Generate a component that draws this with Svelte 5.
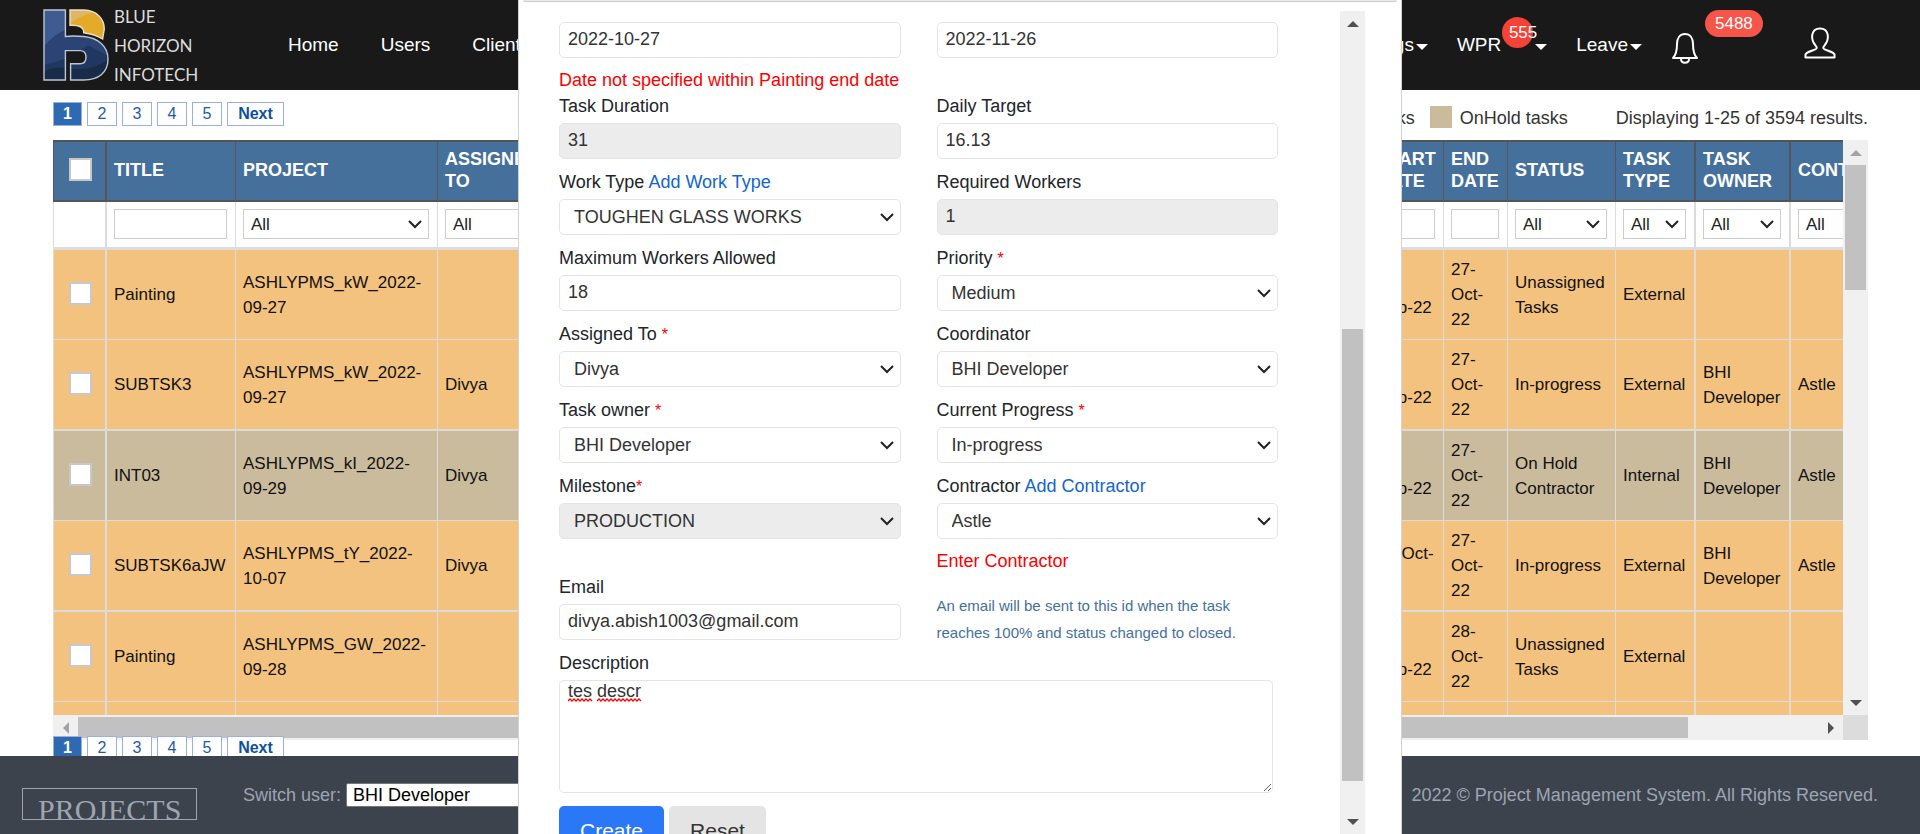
<script>
  const pages = ['1', '2', '3', '4', '5', 'Next'];

  const rows = [
    { title: 'Painting', project: 'ASHLYPMS_kW_2022-09-27', to: '', start: '27-Sep-22', end: '27-Oct-22', status: 'Unassigned Tasks', type: 'External', owner: '', contractor: '' },
    { title: 'SUBTSK3', project: 'ASHLYPMS_kW_2022-09-27', to: 'Divya', start: '27-Sep-22', end: '27-Oct-22', status: 'In-progress', type: 'External', owner: 'BHI Developer', contractor: 'Astle' },
    { title: 'INT03', project: 'ASHLYPMS_kI_2022-09-29', to: 'Divya', start: '29-Sep-22', end: '27-Oct-22', status: 'On Hold Contractor', type: 'Internal', owner: 'BHI Developer', contractor: 'Astle', hold: true },
    { title: 'SUBTSK6aJW', project: 'ASHLYPMS_tY_2022-10-07', to: 'Divya', start: '07-Oct-22', end: '27-Oct-22', status: 'In-progress', type: 'External', owner: 'BHI Developer', contractor: 'Astle' },
    { title: 'Painting', project: 'ASHLYPMS_GW_2022-09-28', to: '', start: '28-Sep-22', end: '28-Oct-22', status: 'Unassigned Tasks', type: 'External', owner: '', contractor: '' },
    { title: '', project: '', to: '', start: '', end: '', status: '', type: '', owner: '', contractor: '' }
  ];

  const fields = [
    { id: 'start', kind: 'input', value: '2022-10-27', aria: 'Start date', error: 'Date not specified within Painting end date' },
    { id: 'end', kind: 'input', value: '2022-11-26', aria: 'End date' },
    { id: 'duration', kind: 'input', label: 'Task Duration', value: '31', off: true },
    { id: 'target', kind: 'input', label: 'Daily Target', value: '16.13' },
    { id: 'worktype', kind: 'select', label: 'Work Type', link: 'Add Work Type', value: 'TOUGHEN GLASS WORKS' },
    { id: 'required', kind: 'input', label: 'Required Workers', value: '1', off: true },
    { id: 'maxworkers', kind: 'input', label: 'Maximum Workers Allowed', value: '18' },
    { id: 'priority', kind: 'select', label: 'Priority ', star: true, value: 'Medium' },
    { id: 'assigned', kind: 'select', label: 'Assigned To ', star: true, value: 'Divya' },
    { id: 'coordinator', kind: 'select', label: 'Coordinator', value: 'BHI Developer' },
    { id: 'owner', kind: 'select', label: 'Task owner ', star: true, value: 'BHI Developer' },
    { id: 'progress', kind: 'select', label: 'Current Progress ', star: true, value: 'In-progress' },
    { id: 'milestone', kind: 'select', label: 'Milestone', star: true, value: 'PRODUCTION', off: true },
    { id: 'contractor', kind: 'select', label: 'Contractor', link: 'Add Contractor', value: 'Astle', error: 'Enter Contractor' },
    { id: 'email', kind: 'input', label: 'Email', value: 'divya.abish1003@gmail.com' }
  ];

  let description = 'tes descr';
</script>

{#snippet pager()}
  <nav class="pager" aria-label="Pages">
    {#each pages as p, i}
      <a href="#page" class:current={i === 0} class:next={p === 'Next'}>{p}</a>
    {/each}
  </nav>
{/snippet}

{#snippet all(name)}
  <select class="filter" aria-label={name}><option>All</option></select>
{/snippet}

{#snippet arrow(dir)}
  <span class="arrow">
    <svg width="12" height="12" viewBox="0 0 12 12">
      {#if dir === 'up'}<path d="M0 9 6 3 12 9Z" />{/if}
      {#if dir === 'down'}<path d="M0 3 6 9 12 3Z" />{/if}
      {#if dir === 'left'}<path d="M9 0 3 6 9 12Z" />{/if}
      {#if dir === 'right'}<path d="M3 0 9 6 3 12Z" />{/if}
    </svg>
  </span>
{/snippet}

<div class="page">
  <header>
    <a class="logo" href="#home">
      <svg width="68" height="72" viewBox="0 0 68 72">
        <defs>
          <clipPath id="bclip">
            <path d="M2 1H23.4V27.5C28 26.8 35 27 42 27.5C56 29 66 37 66 50C66 64 56 71 42 71H28.6V54.8H38C42 54.8 44 52 44 48C44 44 42 41.6 38 41.6H23.4V71H2Z" />
          </clipPath>
        </defs>
        <g clip-path="url(#bclip)">
          <rect width="68" height="72" fill="#2b4475" />
          <path d="M0 0H25V20Q10 26 0 40Z" fill="#3e5b92" />
          <path d="M0 56Q26 52 46 36L68 48V72H0Z" fill="#20385f" />
          <path d="M0 63Q16 56 30 60Q50 62 68 50V72H0Z" fill="#182b48" />
        </g>
        <path d="M2 1H23.4V27.5C28 26.8 35 27 42 27.5C56 29 66 37 66 50C66 64 56 71 42 71H28.6V54.8H38C42 54.8 44 52 44 48C44 44 42 41.6 38 41.6H23.4V71H2Z" fill="none" stroke="#bcc6d4" stroke-width="1.4" />
        <path d="M28 1H42C55 1.500 62.300 10 62.300 20L60.600 30C56 27 49 24.600 41.700 23.700C42 18 37 16 28 16.300Z" fill="#e3ab28" />
        <path d="M28 1H42L51 4Q36 7 28 15Z" fill="#ddb765" />
        <path d="M28 1H42C55 1.500 62.300 10 62.300 20L60.600 30C56 27 49 24.600 41.700 23.700C42 18 37 16 28 16.300Z" fill="none" stroke="#e9dfc4" stroke-width="1.400" />
      </svg>
      <span class="brand">BLUE<br />HORIZON<br />INFOTECH</span>
    </a>
    <nav class="menu">
      <a href="#home">Home</a>
      <a href="#users">Users</a>
      <a href="#clients">Clients</a>
    </nav>
    <nav class="menu right">
      <a href="#settings">Settings<i class="caret"></i></a>
      <a href="#wpr" class="wpr">WPR<b class="dot">555</b><i class="caret"></i></a>
      <a href="#leave">Leave<i class="caret"></i></a>
      <a href="#alerts" class="bell" aria-label="Alerts">
        <svg width="28" height="32" viewBox="0 0 28 32" fill="none" stroke="#fff" stroke-width="2">
          <path d="M2 26C5 23 6 20 6 12C6 6 9 2 14 2S22 6 22 12C22 20 23 23 26 26Z" stroke-linejoin="round" />
          <path d="M10 27C10 32 18 32 18 27" />
        </svg>
        <b class="pill">5488</b>
      </a>
      <a href="#profile" class="user" aria-label="Profile">
        <svg width="32" height="32" viewBox="0 0 32 32" fill="none" stroke="#fff" stroke-width="2" stroke-linejoin="round">
          <path d="M1.500 30.500V27.500C2 24.500 11 23.500 12.500 21.500C13 20.500 12.500 19.500 11.500 18.500C6 12 7 1.500 16 1.500S26 12 20.500 18.500C19.500 19.500 19 20.500 19.500 21.500C21 23.500 30 24.500 30.500 27.500V30.500Z" />
        </svg>
      </a>
    </nav>
  </header>

  <main>
    <div class="toolbar">
      {@render pager()}
      <div class="legend">
        <span class="before">tasks</span>
        <i class="swatch"></i><span>OnHold tasks</span>
        <span class="count">Displaying 1-25 of 3594 results.</span>
      </div>
    </div>

    <div class="grid">
      <div class="view">
        <table>
          <colgroup>
            <col class="c-check" /><col class="c-title" /><col class="c-project" /><col class="c-to" /><col />
            <col class="c-start" /><col class="c-end" /><col class="c-status" /><col class="c-type" /><col class="c-owner" /><col class="c-last" />
          </colgroup>
          <thead>
            <tr>
              <th class="check"><input type="checkbox" aria-label="Select all" /></th>
              <th>TITLE</th><th>PROJECT</th><th>ASSIGNED TO</th><th></th>
              <th>START DATE</th><th>END DATE</th><th>STATUS</th><th class="wide">TASK TYPE</th><th class="wide">TASK OWNER</th><th>CONTRACTOR</th>
            </tr>
            <tr class="filters">
              <td class="check"></td>
              <td><input class="filter" aria-label="Title" /></td>
              <td>{@render all('Project')}</td>
              <td>{@render all('Assigned to')}</td>
              <td></td>
              <td><input class="filter" aria-label="Start date" /></td>
              <td><input class="filter" aria-label="End date" /></td>
              <td>{@render all('Status')}</td>
              <td class="wide">{@render all('Task type')}</td>
              <td class="wide">{@render all('Task owner')}</td>
              <td>{@render all('Contractor')}</td>
            </tr>
          </thead>
          <tbody>
            {#each rows as r}
              <tr class:hold={r.hold}>
                <td class="check">{#if r.title}<input type="checkbox" aria-label={r.title} />{/if}</td>
                <td>{r.title}</td><td>{r.project}</td><td>{r.to}</td><td></td>
                <td>{r.start}</td><td>{r.end}</td><td>{r.status}</td>
                <td class="wide">{r.type}</td><td class="wide">{r.owner}</td><td>{r.contractor}</td>
              </tr>
            {/each}
          </tbody>
        </table>
      </div>
      <div class="bar vertical soft">
        {@render arrow('up')}<i class="thumb v1"></i><i class="v2"></i>{@render arrow('down')}
      </div>
      <div class="bar horizontal">
        {@render arrow('left')}<i class="thumb h1"></i><i class="h2"></i>{@render arrow('right')}
      </div>
      <div class="corner"></div>
    </div>
    <div class="below">{@render pager()}</div>
  </main>

  <footer>
    <div class="stamp"><span>PROJECTS</span></div>
    <label for="switch">Switch user:</label>
    <select id="switch"><option>BHI Developer</option></select>
    <span class="copy">2022 © Project Management System. All Rights Reserved.</span>
  </footer>
</div>

<div class="overlay">
  <div class="dialog" role="dialog" aria-label="Task">
    <div class="titlebar"></div>
    <div class="body">
      <form>
        <div class="fields">
          {#each fields as f}
            <div class="field">
              {#if f.label}
                <div class="caption">
                  <label for={f.id}>{f.label}{#if f.star}<em>*</em>{/if}</label>
                  {#if f.link}<a href="#{f.id}">{f.link}</a>{/if}
                </div>
              {/if}
              {#if f.kind === 'input'}
                <input id={f.id} value={f.value} readonly={f.off} class:off={f.off} aria-label={f.aria} />
              {:else}
                <select id={f.id} class:off={f.off}><option>{f.value}</option></select>
              {/if}
              {#if f.error}<p class="error">{f.error}</p>{/if}
            </div>
          {/each}
          <p class="help">An email will be sent to this id when the task reaches 100% and status changed to closed.</p>
          <div class="field full">
            <div class="caption"><label for="description">Description</label></div>
            <div class="area">
              <textarea id="description" bind:value={description}></textarea>
              <svg class="squiggle" width="76" height="4" viewBox="0 0 76 4" fill="none" stroke="#f00" stroke-width="1.300">
                <path d="M0 3l2-2 2 2 2-2 2 2 2-2 2 2 2-2 2 2 2-2 2 2 2-2 2 2M29 3l2-2 2 2 2-2 2 2 2-2 2 2 2-2 2 2 2-2 2 2 2-2 2 2 2-2 2 2 2-2 2 2 2-2 2 2 2-2 2 2 2-2 2 2" />
              </svg>
            </div>
          </div>
        </div>
        <div class="actions">
          <button type="button" class="create">Create</button>
          <button type="button">Reset</button>
        </div>
      </form>
      <div class="bar vertical">
        {@render arrow('up')}<i class="m1"></i><i class="thumb m2"></i><i class="m3"></i>{@render arrow('down')}
      </div>
    </div>
  </div>
</div>

<style>
  :global(body) {
    margin: 0;
    overflow: hidden;
    font-family: 'Liberation Sans', Arial, sans-serif;
    background: #fff;
  }
  * { box-sizing: border-box; }
  a { text-decoration: none; }
  input, select, textarea, button { font-family: inherit; margin: 0; }
  select {
    appearance: none;
    background: #fff url("data:image/svg+xml,%3Csvg xmlns='http://www.w3.org/2000/svg' width='14' height='9' viewBox='0 0 14 9'%3E%3Cpath d='M1 1l6 6 6-6' fill='none' stroke='%23222' stroke-width='2'/%3E%3C/svg%3E") no-repeat right 6px center;
  }

  .page {
    height: 100vh;
    display: flex;
    flex-direction: column;
    overflow: hidden;
    font-size: 18px;
    color: #333;
  }

  header {
    flex: none;
    height: 90px;
    display: flex;
    align-items: center;
    padding: 0 84px 0 42px;
    background: #191919;
  }
  .logo { display: flex; align-items: center; gap: 4px; width: 246px; }
  .brand { font: 17px/29px Lato, sans-serif; color: #dcdcdc; }
  .menu { display: flex; align-items: center; gap: 42px; font-size: 19px; }
  .menu a { color: #fff; display: flex; align-items: center; }
  .menu.right { margin-left: auto; gap: 29px; }
  .caret {
    margin: 4px 0 0 2px;
    border: 6px solid transparent;
    border-top-color: #fff;
    border-bottom: 0;
  }
  .wpr { position: relative; }
  .wpr .caret { margin-left: 34px; }
  .dot {
    position: absolute;
    left: 45px;
    top: -17px;
    width: 31px;
    height: 31px;
    padding-left: 7px;
    border-radius: 50%;
    background: #f44336;
    font: 17px/31px 'Liberation Sans', sans-serif;
  }
  .bell { position: relative; top: 3px; }
  .pill {
    position: absolute;
    left: 34px;
    top: -22px;
    padding: 0 10px;
    border-radius: 14px;
    background: #f75549;
    font: 17px/27px 'Liberation Sans', sans-serif;
  }
  .user { position: relative; top: -2px; margin-left: 76px; }

  main {
    flex: 1;
    min-height: 0;
    display: flex;
    flex-direction: column;
    padding: 12px 52px 0 53px;
    overflow: hidden;
  }
  .toolbar { display: flex; justify-content: space-between; align-items: flex-start; height: 38px; }
  .pager { display: flex; gap: 5px; }
  .pager a {
    width: 30px;
    height: 24px;
    border: 1px solid #9aafe5;
    background: #fff;
    color: #1e5aa8;
    font-size: 16px;
    line-height: 22px;
    text-align: center;
  }
  .pager a.current { width: 29px; background: #2e6ab1; color: #fff; font-weight: bold; }
  .pager a.next { width: 57px; color: #0e509e; font-weight: bold; }
  .legend { display: flex; align-items: center; gap: 8px; padding-top: 2px; }
  .legend span { padding-top: 4px; }
  .before { margin-right: 7px; }
  .swatch { width: 22px; height: 22px; background: #cbbb9d; }
  .count { margin-left: 40px; }

  .grid {
    flex: 1;
    min-height: 0;
    display: grid;
    grid-template: minmax(0, 1fr) 25px / minmax(0, 1fr) 25px;
  }
  .view { overflow: hidden; }
  .below { flex: none; height: 20px; margin-top: -4px; z-index: 1; }
  .corner { background: #dcdcdc; }
  .bar { display: flex; background: #f0f0f0; }
  .bar.vertical { flex-direction: column; width: 25px; }
  .arrow { flex: none; width: 25px; height: 25px; display: grid; place-items: center; }
  .arrow path { fill: #505050; }
  .soft .arrow:first-child path, .horizontal .arrow:first-child path { fill: #a3a3a3; }
  .thumb { background: #c1c1c1; }
  .vertical .thumb { margin: 0 2px; }
  .horizontal .thumb { margin: 2px 0; }
  .v1 { flex: 5; }
  .v2 { flex: 16; }
  .h1 { flex: 161; }
  .h2 { flex: 13; }
  .m1 { flex: 293; }
  .m2 { flex: 452; }
  .m3 { flex: 28; }

  table {
    width: calc(100% + 87px);
    table-layout: fixed;
    border-collapse: separate;
    border-spacing: 0;
    font-size: 17px;
    line-height: 25px;
    color: #111;
  }
  .c-check { width: 54px; }
  .c-title { width: 129px; }
  .c-project { width: 202px; }
  .c-to { width: 124px; }
  .c-start { width: 74px; }
  .c-end { width: 64px; }
  .c-status { width: 108px; }
  .c-type { width: 80px; }
  .c-owner { width: 95px; }
  .c-last { width: 139px; }
  th, td {
    padding: 0 8px 0 7px;
    border: 0 solid #dcdcdc;
    border-right-width: 1px;
    text-align: left;
    vertical-align: middle;
  }
  th {
    height: 62px;
    padding-bottom: 2px;
    border-color: #555;
    border-top-width: 2px;
    border-bottom-width: 2px;
    background: #45709c;
    color: #fff;
    font-size: 18px;
    line-height: 22px;
  }
  th.check, td.check { border-left-width: 1px; text-align: center; padding: 0 0 3px 2px; }
  .check, .wide { border-right-width: 2px; }
  .filters td { height: 48px; border-bottom-width: 3px; padding-bottom: 1px; }
  tbody td { height: 90px; background: #f3c27e; border-bottom-width: 1px; }
  tbody tr:nth-child(even) td { height: 91px; border-bottom-width: 2px; }
  tbody tr.hold td { background: #cbbb9d; }
  input[type='checkbox'] {
    appearance: none;
    display: block;
    width: 23px;
    height: 23px;
    margin: 0 auto;
    border: 2px solid #c8c8c8;
    background: #fff;
  }
  .filter {
    display: block;
    width: 100%;
    height: 30px;
    padding: 0 7px;
    border: 1px solid #ccc;
    border-radius: 0;
    font-size: 17px;
    color: #222;
  }

  footer {
    flex: none;
    height: 78px;
    z-index: 2;
    display: flex;
    align-items: center;
    padding: 0 42px 0 22px;
    background: #3c434d;
    color: #9da5b3;
  }
  .stamp {
    width: 175px;
    height: 32px;
    margin: 18px 46px 0 0;
    padding: 3px 0 0 15px;
    border: 1px solid #9da5b3;
    overflow: hidden;
    font: 30px/36px 'Liberation Serif', serif;
  }
  #switch {
    width: 300px;
    height: 24px;
    margin-left: 5px;
    padding: 0 6px;
    border: 1px solid #767676;
    border-radius: 2px;
    font-size: 18px;
    color: #000;
  }
  .copy { margin-left: auto; }

  .overlay {
    position: fixed;
    inset: 0;
    z-index: 5;
    display: flex;
    justify-content: center;
  }
  .dialog {
    width: min(884px, 100%);
    display: flex;
    flex-direction: column;
    background: #fff;
    border: solid #d3d3d3;
    border-width: 0 1px;
    color: #212529;
    font-size: 18px;
    overflow: hidden;
  }
  .titlebar {
    flex: none;
    height: 2px;
    margin: 0 4px 9px;
    background: #e9e9e9;
    border-bottom: 1px solid #ccc;
    border-radius: 0 0 3px 3px;
  }
  .body { flex: 1; min-height: 0; display: flex; padding: 0 36px 0 40px; }
  form { flex: 1; padding: 11px 62px 0 0; overflow: hidden; }
  .fields { display: grid; grid-template-columns: 1fr 1fr; gap: 12px 36px; }
  .field { display: flex; flex-direction: column; gap: 4px; min-width: 0; }
  .full { grid-column: 1 / -1; }
  .caption { height: 24px; line-height: 23px; }
  .caption em { color: #f00; font-style: normal; font-size: 16px; line-height: 1; }
  .caption a { color: #1265ce; }
  .field input, .field select, textarea {
    width: 100%;
    height: 36px;
    border: 1px solid #e2e4e6;
    border-radius: 5px;
    padding: 0 8px 1px;
    background-color: #fff;
    color: #333;
    font-size: 18px;
  }
  .field select { padding-left: 14px; }
  .field .off { background-color: #ececec; }
  .error { margin: 6px 0 -9px; line-height: 24px; color: #f00; white-space: nowrap; }
  .help { margin: 0; padding-top: 16px; font-size: 15px; line-height: 27px; color: #45709c; height: 64px; }
  .area { position: relative; margin-right: 5px; }
  .field textarea { display: block; height: 113px; line-height: 20px; resize: both; }
  .squiggle { position: absolute; left: 9px; top: 18px; }
  .actions { display: flex; gap: 5px; margin-top: 13px; }
  button {
    height: 50px;
    padding: 0 21px;
    border: 0;
    border-radius: 5px;
    background: #e4e4e4;
    color: #333;
    font-size: 21px;
  }
  .create { background: #2a78f8; color: #fff; }
</style>
